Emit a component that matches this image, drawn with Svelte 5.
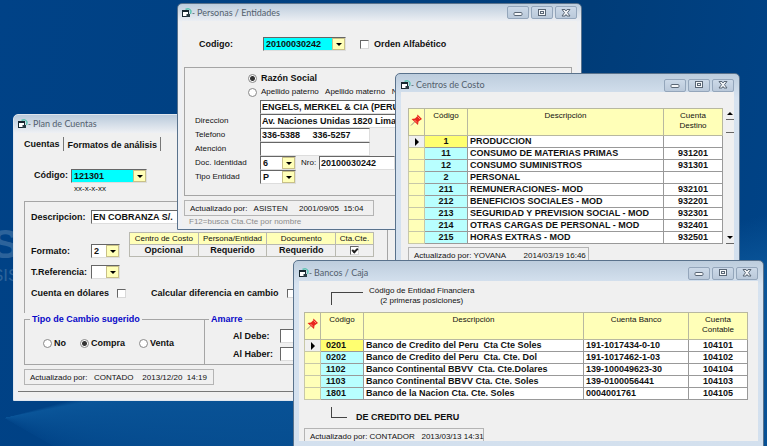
<script lang="ts">
    let codigo = $state("20100030242");
    let alfabetico = $state(false);
    let tipoNombre = $state("razon");
    let nombre = $state("ENGELS, MERKEL & CIA (PERU) S.A.");
    let direccion = $state("Av. Naciones Unidas 1820 Lima");
    let telefono = $state("336-5388     336-5257");
    let atencion = $state("");
    let documento = $state("20100030242");

    let descripcion = $state("EN COBRANZA S/.");
    let dolares = $state(false);
    let diferencia = $state(false);
    let ctaCte = $state(true);
    let cambio = $state("Compra");
    let debe = $state("");
    let haber = $state("");

    let centroActual = $state("1");
    let bancoActual = $state("0201");

    const centros = [
        ["1", "PRODUCCION", ""],
        ["11", "CONSUMO DE MATERIAS PRIMAS", "931201"],
        ["12", "CONSUMO SUMINISTROS", "931301"],
        ["2", "PERSONAL", ""],
        ["211", "REMUNERACIONES- MOD", "932101"],
        ["212", "BENEFICIOS SOCIALES - MOD", "932201"],
        ["213", "SEGURIDAD Y PREVISION SOCIAL - MOD", "932301"],
        ["214", "OTRAS CARGAS DE PERSONAL - MOD", "932401"],
        ["215", "HORAS EXTRAS - MOD", "932501"],
    ];

    const bancos = [
        ["0201", "Banco de Credito del Peru  Cta Cte Soles", "191-1017434-0-10", "104101"],
        ["0202", "Banco de Credito del Peru  Cta. Cte. Dol", "191-1017462-1-03", "104102"],
        ["1102", "Banco Continental BBVV  Cta. Cte.Dolares", "139-100049623-30", "104104"],
        ["1103", "Banco Continental BBVV Cta. Cte. Soles", "139-0100056441", "104103"],
        ["1801", "Banco de la Nacion Cta. Cte. Soles", "0004001761", "104105"],
    ];
</script>

{#snippet titlebar(title: string, controls: boolean)}
    <header class="titlebar">
        <svg class="form-icon" viewBox="0 0 14 10" aria-hidden="true">
            <path d="M3.500 1.500Q7.500 -.5 9 3L8.500 6" fill="none" stroke="#5fc4b4" stroke-width="1.500" />
            <rect x=".5" y="2.500" width="6" height="6" fill="#fff" stroke="#16262e" />
            <path d="M0 3h7" stroke="#16262e" stroke-width="2" />
            <path d="M4.500 6h3.500v3h-3.500z" fill="#2a3c44" />
            <path d="M10.500 5.500h2" stroke="#6d7c88" />
        </svg>
        <h2>{title}</h2>
        {#if controls}
            <div class="controls">
                <button aria-label="Minimizar">
                    <svg viewBox="0 0 12 8"><rect x="2" y="3.500" width="8" height="3" rx="1" /></svg>
                </button>
                <button aria-label="Maximizar">
                    <svg viewBox="0 0 12 8"><rect x="2.500" y=".5" width="7" height="6" /><rect x="4.500" y="2.500" width="3" height="2" /></svg>
                </button>
                <button aria-label="Cerrar">
                    <svg viewBox="0 0 12 8"><path d="M2 .5h3l1 1.500l1-1.500h3l-2.500 3.200l2.500 3.300h-3l-1-1.500l-1 1.500h-3l2.500-3.300z" /></svg>
                </button>
            </div>
        {/if}
    </header>
{/snippet}

{#snippet pin()}
    <svg class="pin" viewBox="0 0 12 12" aria-label="Fijar">
        <path d="M1 11L5 7" stroke="#9a8f80" />
        <path d="M7.500 0L12 4.500L10.500 5.500L8.500 7L8 10.500L1.500 4.500L5 4L7 2z" fill="#e8261c" />
        <path d="M7.500 2L10 4.500M4.500 5.500L7 8" stroke="#ff8a78" />
    </svg>
{/snippet}

{#snippet combo(id: string, value: string)}
    <span class="combo">
        <select {id}><option>{value}</option></select>
    </span>
{/snippet}

<main class="desktop">
    <div class="brand"><b>S</b><span>SIS</span></div>

    <section class="window plan">
        {@render titlebar("Plan de Cuentas", false)}
        <div class="client">
            <nav class="tabs">
                <button class="active">Cuentas</button>
                <button>Formatos de análisis</button>
            </nav>
            <div class="cuenta-code">
                <label for="cuenta">Código:</label>
                {@render combo("cuenta", "121301")}
                <small>xx-x-x-xx</small>
            </div>
            <div class="box cuenta-box">
                <div class="line">
                    <label for="descripcion">Descripcion:</label>
                    <input id="descripcion" class="field" bind:value={descripcion} />
                </div>
                <div class="middle">
                    <div class="selectors">
                        <label for="formato">Formato:</label>
                        {@render combo("formato", "2")}
                        <label for="referencia">T.Referencia:</label>
                        {@render combo("referencia", "")}
                    </div>
                    <table class="requisitos">
                        <thead>
                            <tr><th>Centro de Costo</th><th>Persona/Entidad</th><th>Documento</th><th>Cta.Cte.</th></tr>
                        </thead>
                        <tbody>
                            <tr>
                                <td>Opcional</td>
                                <td>Requerido</td>
                                <td>Requerido</td>
                                <td><input type="checkbox" aria-label="Cta.Cte." bind:checked={ctaCte} /></td>
                            </tr>
                        </tbody>
                    </table>
                </div>
                <div class="checks">
                    <label>Cuenta en dólares <input type="checkbox" bind:checked={dolares} /></label>
                    <label>Calcular diferencia en cambio <input type="checkbox" bind:checked={diferencia} /></label>
                </div>
            </div>
            <div class="groups">
                <fieldset class="cambio">
                    <legend>Tipo de Cambio sugerido</legend>
                    {#each ["No", "Compra", "Venta"] as opcion}
                        <label><input type="radio" name="cambio" value={opcion} bind:group={cambio} />{opcion}</label>
                    {/each}
                </fieldset>
                <fieldset class="amarre">
                    <legend>Amarre</legend>
                    <label for="debe">Al Debe:</label>
                    <input id="debe" class="field" bind:value={debe} />
                    <label for="haber">Al Haber:</label>
                    <input id="haber" class="field" bind:value={haber} />
                </fieldset>
            </div>
            <p class="status">Actualizado por:   CONTADO    2013/12/20  14:19</p>
            <hr />
        </div>
    </section>

    <section class="window personas">
        {@render titlebar("Personas / Entidades", true)}
        <div class="client">
            <div class="persona-code">
                <label for="codigo">Codigo:</label>
                {@render combo("codigo", codigo)}
                <label class="orden"><input type="checkbox" bind:checked={alfabetico} />Orden Alfabético</label>
            </div>
            <div class="box persona-box">
                <label class="option strong"><input type="radio" name="nombre" value="razon" bind:group={tipoNombre} />Razón Social</label>
                <label class="option"><input type="radio" name="nombre" value="apellidos" bind:group={tipoNombre} />Apellido paterno   Apellido materno   Nombres</label>
                <div class="form">
                    <span></span>
                    <input class="field" aria-label="Razón Social" bind:value={nombre} />
                    <label for="direccion">Direccion</label>
                    <input id="direccion" class="field" bind:value={direccion} />
                    <label for="telefono">Telefono</label>
                    <input id="telefono" class="field medium" bind:value={telefono} />
                    <label for="atencion">Atención</label>
                    <input id="atencion" class="field medium" bind:value={atencion} />
                    <label for="doc">Doc. Identidad</label>
                    <div class="identidad">
                        {@render combo("doc", "6")}
                        <label for="nro">Nro:</label>
                        <input id="nro" class="field" bind:value={documento} />
                    </div>
                    <label for="entidad">Tipo Entidad</label>
                    {@render combo("entidad", "P")}
                </div>
            </div>
            <p class="status">Actualizado por:   ASISTEN     2001/09/05  15:04</p>
            <p class="hint">F12=busca Cta.Cte por nombre</p>
        </div>
    </section>

    <section class="window centros">
        {@render titlebar("Centros de Costo", true)}
        <div class="client">
            <div class="scroller">
                <table class="grid">
                    <colgroup><col class="mark" /><col class="code" /><col /><col class="cuenta" /></colgroup>
                    <thead>
                        <tr><th>{@render pin()}</th><th>Código</th><th>Descripción</th><th>Cuenta Destino</th></tr>
                    </thead>
                    <tbody>
                        {#each centros as [code, name, cuenta]}
                            <tr class:current={code === centroActual} onclick={() => (centroActual = code)}>
                                <td></td><td>{code}</td><td>{name}</td><td>{cuenta}</td>
                            </tr>
                        {/each}
                    </tbody>
                </table>
                <div class="scrollbar">
                    <button class="up" aria-label="Subir"></button>
                    <span class="thumb"></span>
                    <button class="down" aria-label="Bajar"></button>
                </div>
            </div>
            <p class="status">Actualizado por: YOVANA        2014/03/19 16:46</p>
        </div>
    </section>

    <section class="window bancos">
        {@render titlebar("Bancos / Caja", true)}
        <div class="client">
            <div class="note">
                <i class="bracket"></i>
                <p>Código de Entidad Financiera<br />(2 primeras posiciones)</p>
            </div>
            <table class="grid">
                <colgroup><col class="mark" /><col class="code" /><col /><col class="banco" /><col class="cuenta" /></colgroup>
                <thead>
                    <tr><th>{@render pin()}</th><th>Código</th><th>Descripción</th><th>Cuenta Banco</th><th>Cuenta Contable</th></tr>
                </thead>
                <tbody>
                    {#each bancos as [code, name, banco, cuenta]}
                        <tr class:current={code === bancoActual} onclick={() => (bancoActual = code)}>
                            <td></td><td>{code}</td><td>{name}</td><td>{banco}</td><td>{cuenta}</td>
                        </tr>
                    {/each}
                </tbody>
            </table>
            <div class="note below">
                <i class="bracket"></i>
                <strong>DE CREDITO DEL PERU</strong>
            </div>
            <p class="status">Actualizado por: CONTADOR   2013/03/13 14:31</p>
        </div>
    </section>
</main>

<style>
    :global(body) {
        margin: 0;
        background: #003f82;
    }

    .desktop,
    .desktop :global(*),
    .desktop :global(*::before) {
        box-sizing: border-box;
    }

    .desktop {
        --plain: "Liberation Sans", Arial, sans-serif;
        --line: #a5a5a5;
        position: relative;
        height: 100vh;
        overflow: hidden;
        color: #111;
        font: bold 9px/12px "Liberation Sans", Arial, sans-serif;
        background:
            conic-gradient(from 75deg at 4px 418px, transparent 0deg, #0a5599 4deg, #07509633 44deg, transparent 45deg),
            linear-gradient(100deg, #004287, #00407f 50%, #003c78 70%, #004489);
    }

    .brand {
        position: absolute;
        top: 224px;
        left: -8px;
        color: #2c639b;
        font: 17px/24px "Liberation Sans", Arial, sans-serif;
    }

    .brand b {
        display: block;
        font-size: 40px;
        line-height: 40px;
    }

    p,
    h2 {
        margin: 0;
        font-weight: normal;
    }

    /* windows */
    .window {
        position: absolute;
        display: flex;
        flex-direction: column;
        padding: 0 5px 5px;
        border: 1px solid #59728c;
        border-radius: 5px 5px 0 0;
        background: linear-gradient(#bdcddd, #d7e3f0 24px, #d3e0ee);
    }

    .client {
        flex: 1;
        background: #f0f0f0;
    }

    .titlebar {
        display: flex;
        align-items: center;
        height: 20px;
    }

    .form-icon {
        width: 14px;
        height: 10px;
        margin-right: 1px;
    }

    h2 {
        flex: 1;
        color: #53606d;
        font: 9px/12px Lato, "Open Sans", sans-serif;
    }

    .controls {
        display: flex;
        gap: 2px;
    }

    .controls button {
        width: 22px;
        height: 13px;
        padding: 0;
        border: 1px solid #94a6bb;
        border-radius: 2px;
        background: linear-gradient(#ccd9e8, #bac9da);
        line-height: 0;
    }

    .controls svg {
        width: 12px;
        height: 8px;
        fill: #f5f7f9;
        stroke: #596675;
    }

    /* controls shared by the forms */
    button,
    input,
    select {
        margin: 0;
        border: 0;
        border-radius: 0;
        color: inherit;
        font: inherit;
    }

    .field,
    .combo {
        height: 14px;
        border: 1px solid #ddd;
        border-top-color: #666;
        border-left-color: #666;
        background: #fff;
    }

    .field {
        width: 100%;
        min-width: 0;
        padding: 0 1px;
    }

    .combo {
        position: relative;
        display: block;
        width: 36px;
    }

    .combo select {
        display: block;
        width: 100%;
        height: 12px;
        padding: 0 2px;
        appearance: none;
        background: none;
        line-height: 12px;
    }

    .combo::before {
        content: "";
        position: absolute;
        inset: 0 0 0 auto;
        width: 13px;
        border: 1px solid #c8c088;
        background: #ffffb8;
        pointer-events: none;
    }

    .combo::after {
        content: "";
        position: absolute;
        top: 5px;
        right: 3px;
        border: 3px solid transparent;
        border-top-color: #000;
        border-bottom: 0;
        pointer-events: none;
    }

    input[type="checkbox"],
    input[type="radio"] {
        flex: none;
        width: 9px;
        height: 9px;
        border: 1px solid #d8d8d8;
        border-top-color: #666;
        border-left-color: #666;
        appearance: none;
        background: #fff;
    }

    input[type="checkbox"]:checked::before {
        content: "";
        display: block;
        width: 6px;
        height: 4px;
        margin: 1px 0 0 1px;
        border: solid #222;
        border-width: 0 0 2px 2px;
        transform: rotate(-45deg);
    }

    input[type="radio"] {
        border-color: #888;
        border-radius: 50%;
    }

    input[type="radio"]:checked {
        background: radial-gradient(#333 0 2px, #fff 3px);
    }

    .box {
        border: 1px solid var(--line);
    }

    .status {
        width: 190px;
        height: 16px;
        padding: 0 5px;
        border: 1px solid #b4b4b4;
        font: 8px/15px var(--plain);
        white-space: pre;
    }

    /* plan de cuentas */
    .plan {
        top: 114px;
        left: 13px;
        width: 388px;
        height: 287px;
        padding: 0 4px 2px;
        background: linear-gradient(#b9cadb, #eef0f4 18px);
        border-color: #dfe6ee;
    }

    .plan .client {
        padding: 4px 8px 0 6px;
    }

    .tabs {
        display: flex;
    }

    .tabs button {
        height: 14px;
        padding: 1px 3px 0 4px;
        border-right: 1px solid #777;
        background: none;
        line-height: 12px;
    }

    .tabs .active {
        padding: 0 3px 0 0;
    }

    .cuenta-code {
        display: grid;
        grid-template-columns: 37px 76px;
        padding: 18px 0 7px 10px;
    }

    .cuenta-code .combo {
        width: 76px;
        background: #00ffff;
    }

    .cuenta-code small {
        grid-column: 2;
        padding-left: 3px;
        font: 8px/11px var(--plain);
    }

    .cuenta-box {
        height: 112px;
        padding: 8px 0 0 6px;
        border-bottom: 0;
    }

    .line {
        display: grid;
        grid-template-columns: 60px 1fr;
        align-items: center;
    }

    .middle {
        display: flex;
        gap: 9px;
        margin-top: 8px;
    }

    .selectors {
        display: grid;
        grid-template-columns: 60px 29px;
        row-gap: 7px;
        align-items: center;
        padding-top: 12px;
    }

    .selectors .combo {
        width: 29px;
    }

    .requisitos {
        width: 245px;
        border-collapse: collapse;
        table-layout: fixed;
        align-self: start;
    }

    .requisitos th,
    .requisitos td {
        height: 12px;
        padding: 0;
        border: 1px solid #b9b9b0;
        line-height: 11px;
        text-align: center;
        white-space: nowrap;
    }

    .requisitos th {
        background: #ffffb8;
        font: 8px/11px var(--plain);
    }

    .requisitos th:last-child {
        width: 38px;
    }

    .requisitos input {
        display: block;
        margin: auto;
    }

    .checks {
        display: flex;
        gap: 25px;
        margin-top: 8px;
    }

    .checks label {
        display: flex;
        gap: 8px;
        align-items: center;
    }

    .groups {
        display: flex;
        height: 52px;
    }

    fieldset {
        display: flex;
        min-width: 0;
        margin: 0;
        padding: 0;
        border: 1px solid var(--line);
    }

    legend {
        padding: 0 2px;
        color: #0808c8;
        line-height: 12px;
    }

    .cambio {
        width: 181px;
        gap: 14px;
        padding: 12px 0 0 18px;
    }

    .cambio legend {
        margin-left: -13px;
    }

    .cambio label {
        display: flex;
        gap: 2px;
        align-items: center;
        height: 12px;
    }

    .amarre {
        flex: 1;
        display: grid;
        grid-template-columns: 47px 80px;
        row-gap: 4px;
        align-items: center;
        align-content: start;
        padding: 4px 0 0 28px;
        border-left: 0;
    }

    .amarre legend {
        margin-left: -24px;
    }

    .plan .status {
        margin-top: 4px;
    }

    hr {
        margin: 6px -8px 0 -6px;
        border: 0;
        border-top: 1px solid #777;
    }

    /* personas */
    .personas {
        top: 3px;
        left: 177px;
        width: 405px;
        height: 227px;
        padding: 0 4px 2px;
        background: linear-gradient(#bdcddd, #eef0f4 18px);
    }

    .personas .titlebar,
    .plan .titlebar {
        height: 18px;
    }

    .personas .client {
        padding: 16px 5px 0 2px;
    }

    .persona-code {
        display: grid;
        grid-template-columns: 64px 83px 1fr;
        align-items: center;
        padding: 0 0 16px 15px;
    }

    .persona-code .combo {
        width: 83px;
        background: #00ffff;
    }

    .orden {
        display: flex;
        gap: 5px;
        align-items: center;
        margin-left: 14px;
    }

    .persona-box {
        height: 129px;
        padding: 3px 0 0 10px;
    }

    .option {
        display: flex;
        gap: 4px;
        align-items: center;
        height: 14px;
        padding-left: 53px;
        font: 8px/14px var(--plain);
        white-space: pre;
    }

    .option.strong {
        font: inherit;
    }

    .form {
        display: grid;
        grid-template-columns: 65px 1fr;
        grid-auto-rows: 14px;
        align-items: center;
        margin-top: 1px;
    }

    .form label {
        font: 8px/14px var(--plain);
    }

    .form .medium {
        width: 110px;
    }

    .identidad {
        display: grid;
        grid-template-columns: 41px 18px 76px;
    }

    .personas .status {
        margin-top: 4px;
    }

    .hint {
        padding-left: 5px;
        color: #8b8b8b;
        font: 8px/11px var(--plain);
    }

    /* centros y bancos */
    .grid {
        width: 100%;
        border-collapse: collapse;
        table-layout: fixed;
        background: #fff;
    }

    .mark {
        width: 16px;
    }

    .code {
        width: 43px;
    }

    .cuenta {
        width: 59px;
    }

    .banco {
        width: 105px;
    }

    .grid th {
        height: 27px;
        padding: 2px 8px;
        border: 1px solid #b8b8a0;
        background: #ffffb8;
        font: 8px/10px var(--plain);
        vertical-align: top;
    }

    .grid th:first-child {
        padding: 4px 1px;
    }

    .pin {
        display: block;
        width: 12px;
        height: 15px;
    }

    .grid td {
        height: 12px;
        padding: 0 2px;
        border: 1px solid #999;
        line-height: 11px;
        white-space: pre;
    }

    .grid td:first-child {
        border-color: #c8c8a8;
        background: #ffffb8;
    }

    .grid td:nth-child(2) {
        background: #b8ffff;
    }

    .grid td:nth-child(2),
    .grid td:last-child {
        text-align: center;
    }

    .grid .current td:first-child {
        background: #f0f0f0;
    }

    .grid .current td:nth-child(2) {
        background: #ffff70;
    }

    .current td:first-child::before {
        content: "";
        display: block;
        width: 0;
        margin: auto;
        border: 4px solid transparent;
        border-left-color: #000;
        border-right: 0;
    }

    .centros {
        top: 73px;
        left: 395px;
        width: 345px;
        height: 196px;
    }

    .centros .titlebar {
        height: 22px;
        padding-top: 4px;
    }

    .centros .client {
        padding: 14px 0 0 7px;
    }

    .scroller {
        display: flex;
        gap: 3px;
        padding-top: 2px;
    }

    .scrollbar {
        display: flex;
        flex-direction: column;
        width: 8px;
        flex: none;
    }

    .scrollbar button {
        height: 12px;
        padding: 0;
        border-bottom: 1px solid #666;
        background: none;
    }

    .scrollbar button::before {
        content: "";
        display: block;
        width: 0;
        margin: auto;
        border: 3px solid transparent;
        border-top: 0;
        border-bottom-color: #000;
    }

    .scrollbar .down::before {
        transform: rotate(180deg);
    }

    .thumb {
        height: 13px;
        margin-bottom: auto;
        border-bottom: 1px solid #666;
    }

    .centros .status {
        width: 181px;
        margin-top: 3px;
    }

    .bancos {
        top: 260px;
        left: 293px;
        width: 471px;
        height: 187px;
    }

    .bancos .client {
        padding: 5px 10px 0 5px;
    }

    .bancos .titlebar {
        padding-top: 4px;
    }

    .note {
        display: flex;
        gap: 6px;
        height: 26px;
        padding-left: 27px;
    }

    .note p {
        font: 8px/10px var(--plain);
        text-align: center;
    }

    .bracket {
        width: 32px;
        height: 13px;
        margin-top: 6px;
        border: solid #444;
        border-width: 1px 0 0 1px;
    }

    .bancos .grid td:nth-child(2) {
        padding-left: 5px;
        text-align: left;
    }

    .below {
        height: 28px;
        gap: 9px;
        padding-top: 1px;
    }

    .below .bracket {
        width: 16px;
        height: 11px;
        border-width: 0 0 1px 1px;
    }

    .below strong {
        margin-top: 10px;
    }

    .bancos .status {
        width: 180px;
        height: 13px;
        border-bottom: 0;
    }
</style>
